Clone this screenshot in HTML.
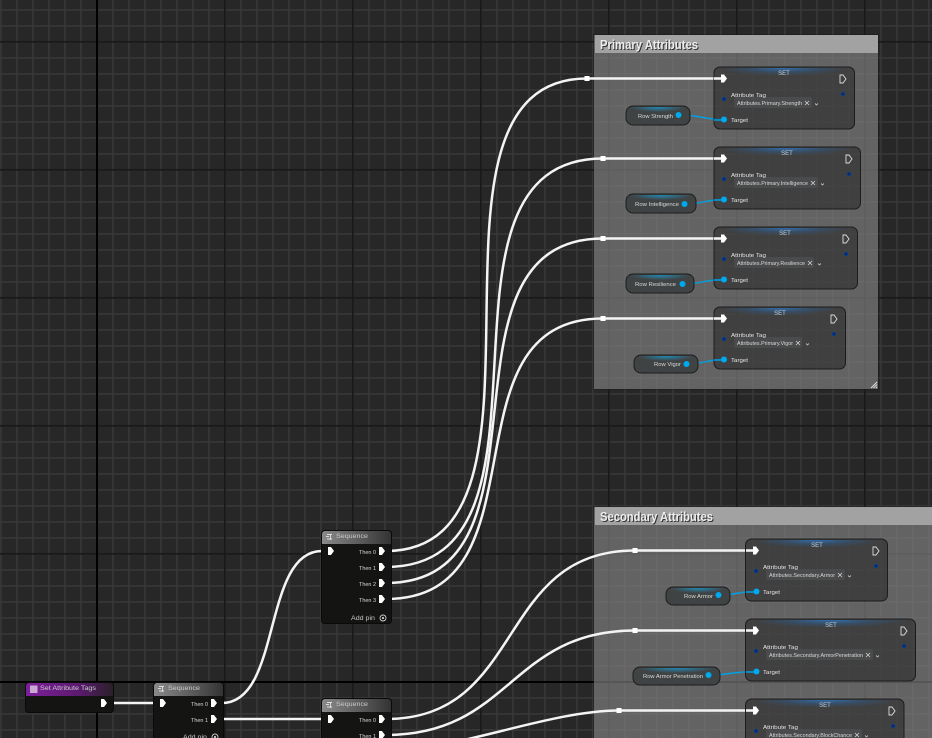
<!DOCTYPE html>
<html><head><meta charset="utf-8"><style>
html,body{margin:0;padding:0;background:#272727;width:932px;height:738px;overflow:hidden}
svg{display:block;position:absolute;left:0;top:0}
text{font-family:"Liberation Sans",sans-serif}
.s{font-size:5.4px;fill:#d8d8d8}
.t{font-size:5.4px;fill:#e4e4e4}
.c{font-size:13px;fill:#eee;font-weight:bold}
.cs{font-size:13px;fill:#333;font-weight:bold}
.h{font-size:6.6px;fill:#c8c8c8}
.w{fill:none;stroke:#f4f4f4;stroke-width:2.5}
.b{fill:none;stroke:#00a0e4;stroke-width:1.4}
</style></head><body>
<svg width="932" height="738" viewBox="0 0 932 738" xmlns="http://www.w3.org/2000/svg">
<defs>
<pattern id="g" width="16" height="16" patternUnits="userSpaceOnUse" x="0" y="9">
<rect width="16" height="16" fill="#272727"/>
<rect x="0" width="1.700" height="16" fill="#363636"/>
<rect y="0" width="16" height="1.700" fill="#363636"/>
</pattern>
<linearGradient id="sh" x1="0" y1="0" x2="1" y2="0"><stop offset="0" stop-color="#8a8a8a"/><stop offset=".75" stop-color="#4a4a4a"/><stop offset="1" stop-color="#333"/></linearGradient>
<linearGradient id="ph" x1="0" y1="0" x2="1" y2="0"><stop offset="0" stop-color="#7d1f9b"/><stop offset=".6" stop-color="#5c1a70"/><stop offset="1" stop-color="#2a2028"/></linearGradient>
<radialGradient id="bl" cx=".5" cy="0" r=".5"><stop offset="0" stop-color="#2f7fd0" stop-opacity=".75"/><stop offset=".6" stop-color="#2a5f98" stop-opacity=".35"/><stop offset="1" stop-color="#2a5f98" stop-opacity="0"/></radialGradient>
<radialGradient id="cy" cx=".5" cy="0" r=".5"><stop offset="0" stop-color="#18a0d8" stop-opacity=".75"/><stop offset="1" stop-color="#18a0d8" stop-opacity="0"/></radialGradient>
<path id="ex" d="M-3,-4H0L3,0L0,4H-3Z" fill="#fff"/>
<path id="eo" d="M-3,-4H0L3,0L0,4H-3Z" fill="none" stroke="#ddd" stroke-width=".9"/>
</defs>
<rect width="932" height="738" fill="url(#g)"/>
<g fill="#191919">
<rect x="224" width="1.700" height="738"/><rect x="352" width="1.700" height="738"/><rect x="480" width="1.700" height="738"/><rect x="608" width="1.700" height="738"/><rect x="736" width="1.700" height="738"/><rect x="864" width="1.700" height="738"/>
<rect y="41" width="932" height="1.700"/><rect y="169" width="932" height="1.700"/><rect y="297" width="932" height="1.700"/><rect y="425" width="932" height="1.700"/><rect y="553" width="932" height="1.700"/>
</g>
<rect x="96" width="2" height="738" fill="#000"/>
<rect y="681" width="932" height="2" fill="#000"/>

<!-- comment boxes -->
<rect x="593" y="34" width="286" height="356" fill="#1a1a1a" opacity=".5"/>
<rect x="594" y="35" width="284" height="354" fill="#fff" fill-opacity=".3"/>
<rect x="595" y="35" width="283" height="18" fill="#a2a2a2"/>
<text x="601" y="50" class="cs" textLength="98" lengthAdjust="spacingAndGlyphs">Primary Attributes</text>
<text x="600" y="49" class="c" textLength="98" lengthAdjust="spacingAndGlyphs">Primary Attributes</text>
<path d="M877,382L871,388M877,384.500L873.500,388M877,387L876,388" stroke="#ddd" stroke-width="1"/>
<rect x="593" y="506" width="339" height="232" fill="#1a1a1a" opacity=".5"/>
<rect x="594" y="507" width="338" height="231" fill="#fff" fill-opacity=".3"/>
<rect x="595" y="507" width="337" height="18" fill="#a2a2a2"/>
<text x="601" y="522" class="cs" textLength="113" lengthAdjust="spacingAndGlyphs">Secondary Attributes</text>
<text x="600" y="521" class="c" textLength="113" lengthAdjust="spacingAndGlyphs">Secondary Attributes</text>

<!-- white wires -->
<path class="w" d="M113,703H155"/>
<path class="w" d="M222,703C282,703 262,551 322,551H330"/>
<path class="w" d="M222,719H330"/>
<path class="w" d="M386,551C581,551 392,78.500 587,78.500H724"/>
<path class="w" d="M386,567C581,567 408,158.500 603,158.500H724"/>
<path class="w" d="M386,583C566,583 423,238.500 603,238.500H724"/>
<path class="w" d="M386,599C551,599 438,318.500 603,318.500H724"/>
<path class="w" d="M386,719C526,719 495,550.500 635,550.500H756"/>
<path class="w" d="M386,735C511,735 510,630.500 635,630.500H756"/>
<path class="w" d="M386,751C456,751 549,710.500 619,710.500H756"/>
<g fill="#fff">
<rect x="584.500" y="76" width="5" height="5"/><rect x="600.500" y="156" width="5" height="5"/><rect x="600.500" y="236" width="5" height="5"/><rect x="600.500" y="316" width="5" height="5"/><rect x="632.500" y="548" width="5" height="5"/><rect x="632.500" y="628" width="5" height="5"/><rect x="616.500" y="708" width="5" height="5"/>
</g>

<!-- blue wires -->
<path class="b" d="M679,115C700,115 703,119.500 724,119.500"/>
<path class="b" d="M685,204C703,204 706,199.500 724,199.500"/>
<path class="b" d="M683,284C702,284 705,279.500 724,279.500"/>
<path class="b" d="M687,364C704,364 707,359.500 724,359.500"/>
<path class="b" d="M719,595C737,595 738,591.500 756,591.500"/>
<path class="b" d="M708,675C730,675 734,671.500 756,671.500"/>

<!-- Set Attribute Tags -->
<g>
<rect x="25.500" y="682.500" width="88" height="30" rx="3" fill="#141513" stroke="#0a0a0a"/>
<path d="M26,696V686a3,3 0 0 1 3,-3H110a3,3 0 0 1 3,3V696Z" fill="url(#ph)"/>
<rect x="30" y="685.500" width="7.500" height="7.500" fill="#c9a8d2"/>
<text x="40" y="690" class="h" textLength="56" lengthAdjust="spacingAndGlyphs">Set Attribute Tags</text>
<use href="#ex" x="104" y="703"/>
</g>

<!-- Sequence nodes -->
<g>
<rect x="153.500" y="682.500" width="70" height="70" rx="3" fill="#141513" stroke="#0a0a0a"/>
<path d="M154,696V686a3,3 0 0 1 3,-3H220a3,3 0 0 1 3,3V696Z" fill="url(#sh)"/>
<text x="168" y="690" class="h" textLength="32" lengthAdjust="spacingAndGlyphs">Sequence</text>
<path d="M159,686.500h5M158,688.500h3M159,691h5M162.500,687v5" stroke="#ddd" stroke-width=".9" fill="none"/>
<use href="#ex" x="163" y="703"/><use href="#ex" x="214" y="703"/><use href="#ex" x="214" y="719"/>
<text x="191" y="706" class="s" textLength="17" lengthAdjust="spacingAndGlyphs">Then 0</text>
<text x="191" y="722" class="s" textLength="17" lengthAdjust="spacingAndGlyphs">Then 1</text>
<text x="183" y="739" class="h" textLength="24" lengthAdjust="spacingAndGlyphs">Add pin</text>
<circle cx="215" cy="737" r="3" fill="none" stroke="#ccc" stroke-width=".9"/><circle cx="215" cy="737" r="1.100" fill="#ccc"/>
</g>
<g>
<rect x="321.500" y="530.500" width="70" height="93" rx="3" fill="#141513" stroke="#0a0a0a"/>
<path d="M322,544V534a3,3 0 0 1 3,-3H388a3,3 0 0 1 3,3V544Z" fill="url(#sh)"/>
<text x="336" y="538" class="h" textLength="32" lengthAdjust="spacingAndGlyphs">Sequence</text>
<path d="M327,534.500h5M326,536.500h3M327,539h5M330.500,535v5" stroke="#ddd" stroke-width=".9" fill="none"/>
<use href="#ex" x="331" y="551"/><use href="#ex" x="382" y="551"/><use href="#ex" x="382" y="567"/><use href="#ex" x="382" y="583"/><use href="#ex" x="382" y="599"/>
<text x="359" y="554" class="s" textLength="17" lengthAdjust="spacingAndGlyphs">Then 0</text>
<text x="359" y="570" class="s" textLength="17" lengthAdjust="spacingAndGlyphs">Then 1</text>
<text x="359" y="586" class="s" textLength="17" lengthAdjust="spacingAndGlyphs">Then 2</text>
<text x="359" y="602" class="s" textLength="17" lengthAdjust="spacingAndGlyphs">Then 3</text>
<text x="351" y="620" class="h" textLength="24" lengthAdjust="spacingAndGlyphs">Add pin</text>
<circle cx="383" cy="618" r="3" fill="none" stroke="#ccc" stroke-width=".9"/><circle cx="383" cy="618" r="1.100" fill="#ccc"/>
</g>
<g>
<rect x="321.500" y="698.500" width="70" height="70" rx="3" fill="#141513" stroke="#0a0a0a"/>
<path d="M322,712V702a3,3 0 0 1 3,-3H388a3,3 0 0 1 3,3V712Z" fill="url(#sh)"/>
<text x="336" y="706" class="h" textLength="32" lengthAdjust="spacingAndGlyphs">Sequence</text>
<path d="M327,702.500h5M326,704.500h3M327,707h5M330.500,703v5" stroke="#ddd" stroke-width=".9" fill="none"/>
<use href="#ex" x="331" y="719"/><use href="#ex" x="382" y="719"/><use href="#ex" x="382" y="735"/>
<text x="359" y="722" class="s" textLength="17" lengthAdjust="spacingAndGlyphs">Then 0</text>
<text x="359" y="738" class="s" textLength="17" lengthAdjust="spacingAndGlyphs">Then 1</text>
</g>

<!-- Row variable nodes -->
<g>
<rect x="626" y="106" width="64" height="19" rx="7" fill="#404344" stroke="#1c1c1c"/><rect x="630" y="107" width="56" height="10" fill="url(#cy)"/>
<rect x="626" y="194" width="70" height="19" rx="7" fill="#404344" stroke="#1c1c1c"/><rect x="630" y="195" width="62" height="10" fill="url(#cy)"/>
<rect x="626" y="274" width="68" height="19" rx="7" fill="#404344" stroke="#1c1c1c"/><rect x="630" y="275" width="60" height="10" fill="url(#cy)"/>
<rect x="634" y="355" width="64" height="18" rx="7" fill="#404344" stroke="#1c1c1c"/><rect x="638" y="356" width="56" height="10" fill="url(#cy)"/>
<rect x="666" y="587" width="64" height="18" rx="7" fill="#404344" stroke="#1c1c1c"/><rect x="670" y="588" width="56" height="10" fill="url(#cy)"/>
<rect x="633" y="667" width="87" height="18" rx="7" fill="#404344" stroke="#1c1c1c"/><rect x="637" y="668" width="79" height="10" fill="url(#cy)"/>
</g>
<g fill="#00a8ee">
<circle cx="678.500" cy="115" r="3"/><circle cx="684.500" cy="204" r="3"/><circle cx="682.500" cy="284" r="3"/><circle cx="686.500" cy="364" r="3"/><circle cx="718.500" cy="595" r="3"/><circle cx="708.500" cy="675" r="3"/>
</g>
<text x="638" y="118" class="s" textLength="35" lengthAdjust="spacingAndGlyphs">Row Strength</text>
<text x="635" y="206" class="s" textLength="44" lengthAdjust="spacingAndGlyphs">Row Intelligence</text>
<text x="635" y="286" class="s" textLength="41" lengthAdjust="spacingAndGlyphs">Row Resilience</text>
<text x="654" y="366" class="s" textLength="27" lengthAdjust="spacingAndGlyphs">Row Vigor</text>
<text x="684" y="598" class="s" textLength="29" lengthAdjust="spacingAndGlyphs">Row Armor</text>
<text x="643" y="678" class="s" textLength="60" lengthAdjust="spacingAndGlyphs">Row Armor Penetration</text>

<!-- SET nodes -->
<g fill="#333" fill-opacity=".72" stroke="#1c1c1c" stroke-width="1">
<rect x="714" y="67" width="140.500" height="62" rx="6"/>
<rect x="714" y="147" width="146.500" height="62" rx="6"/>
<rect x="714" y="227" width="143.500" height="62" rx="6"/>
<rect x="714" y="307" width="131.500" height="62" rx="6"/>
<rect x="745.500" y="539" width="142" height="62" rx="6"/>
<rect x="745.500" y="619" width="170" height="62" rx="6"/>
<rect x="745.500" y="699" width="158.500" height="62" rx="6"/>
</g>
<path class="w" d="M714,78.500H724M714,158.500H724M714,238.500H724M714,318.500H724M746,550.500H756M746,630.500H756M746,710.500H756"/>
<path class="b" d="M714,120H724M714,200H724M714,280H724M714,360H724M746,592H756M746,672H756"/>
<g fill="url(#bl)">
<rect x="720" y="68" width="128" height="15"/><rect x="720" y="148" width="134" height="15"/><rect x="720" y="228" width="131" height="15"/><rect x="720" y="308" width="119" height="15"/><rect x="752" y="540" width="129" height="15"/><rect x="752" y="620" width="157" height="15"/><rect x="752" y="700" width="146" height="15"/>
</g>
<g fill="#4a4b4c">
<rect x="734" y="97" width="78" height="11" rx="2"/><rect x="734" y="177" width="84" height="11" rx="2"/><rect x="734" y="257" width="80" height="11" rx="2"/><rect x="734" y="337" width="68" height="11" rx="2"/><rect x="766" y="569" width="79" height="11" rx="2"/><rect x="766" y="649" width="107" height="11" rx="2"/><rect x="766" y="729" width="96" height="11" rx="2"/>
</g>

<g text-anchor="middle" font-size="6" fill="#c4cfd8">
<text x="784" y="75">SET</text><text x="787" y="155">SET</text><text x="785" y="235">SET</text><text x="780" y="315">SET</text><text x="817" y="547">SET</text><text x="831" y="627">SET</text><text x="825" y="707">SET</text>
</g>

<g>
<use href="#ex" x="724" y="78.500"/><use href="#ex" x="724" y="158.500"/><use href="#ex" x="724" y="238.500"/><use href="#ex" x="724" y="318.500"/><use href="#ex" x="756" y="550.500"/><use href="#ex" x="756" y="630.500"/><use href="#ex" x="756" y="710.500"/>
<use href="#eo" x="843" y="79"/><use href="#eo" x="849" y="159"/><use href="#eo" x="846" y="239"/><use href="#eo" x="834" y="319"/><use href="#eo" x="876" y="551"/><use href="#eo" x="904" y="631"/><use href="#eo" x="892" y="711"/>
</g>

<g fill="#082a6a" stroke="#0a3f90" stroke-width=".8">
<circle cx="724" cy="99" r="1.800"/><circle cx="843" cy="94" r="1.800"/>
<circle cx="724" cy="179" r="1.800"/><circle cx="849" cy="174" r="1.800"/>
<circle cx="724" cy="259" r="1.800"/><circle cx="846" cy="254" r="1.800"/>
<circle cx="724" cy="339" r="1.800"/><circle cx="834" cy="334" r="1.800"/>
<circle cx="756" cy="571" r="1.800"/><circle cx="876" cy="566" r="1.800"/>
<circle cx="756" cy="651" r="1.800"/><circle cx="904" cy="646" r="1.800"/>
<circle cx="756" cy="731" r="1.800"/><circle cx="893" cy="726" r="1.800"/>
</g>
<g fill="#00a8ee">
<circle cx="724" cy="119.500" r="3"/><circle cx="724" cy="199.500" r="3"/><circle cx="724" cy="279.500" r="3"/><circle cx="724" cy="359.500" r="3"/><circle cx="756.500" cy="591.500" r="3"/><circle cx="756.500" cy="671.500" r="3"/>
</g>

<g>
<text x="731" y="97" class="t" textLength="35" lengthAdjust="spacingAndGlyphs">Attribute Tag</text>
<text x="731" y="177" class="t" textLength="35" lengthAdjust="spacingAndGlyphs">Attribute Tag</text>
<text x="731" y="257" class="t" textLength="35" lengthAdjust="spacingAndGlyphs">Attribute Tag</text>
<text x="731" y="337" class="t" textLength="35" lengthAdjust="spacingAndGlyphs">Attribute Tag</text>
<text x="763" y="569" class="t" textLength="35" lengthAdjust="spacingAndGlyphs">Attribute Tag</text>
<text x="763" y="649" class="t" textLength="35" lengthAdjust="spacingAndGlyphs">Attribute Tag</text>
<text x="763" y="729" class="t" textLength="35" lengthAdjust="spacingAndGlyphs">Attribute Tag</text>
<text x="731" y="122" class="t" textLength="17" lengthAdjust="spacingAndGlyphs">Target</text>
<text x="731" y="202" class="t" textLength="17" lengthAdjust="spacingAndGlyphs">Target</text>
<text x="731" y="282" class="t" textLength="17" lengthAdjust="spacingAndGlyphs">Target</text>
<text x="731" y="362" class="t" textLength="17" lengthAdjust="spacingAndGlyphs">Target</text>
<text x="763" y="594" class="t" textLength="17" lengthAdjust="spacingAndGlyphs">Target</text>
<text x="763" y="674" class="t" textLength="17" lengthAdjust="spacingAndGlyphs">Target</text>
<text x="737" y="105" class="s" textLength="65" lengthAdjust="spacingAndGlyphs">Attributes.Primary.Strength</text>
<text x="737" y="185" class="s" textLength="71" lengthAdjust="spacingAndGlyphs">Attributes.Primary.Intelligence</text>
<text x="737" y="265" class="s" textLength="68" lengthAdjust="spacingAndGlyphs">Attributes.Primary.Resilience</text>
<text x="737" y="345" class="s" textLength="56" lengthAdjust="spacingAndGlyphs">Attributes.Primary.Vigor</text>
<text x="769" y="577" class="s" textLength="66" lengthAdjust="spacingAndGlyphs">Attributes.Secondary.Armor</text>
<text x="769" y="657" class="s" textLength="94" lengthAdjust="spacingAndGlyphs">Attributes.Secondary.ArmorPenetration</text>
<text x="769" y="737" class="s" textLength="83" lengthAdjust="spacingAndGlyphs">Attributes.Secondary.BlockChance</text>
</g>

<g fill="none" stroke="#ddd" stroke-width=".7">
<path d="M805,101l4,4M809,101l-4,4M815,103.500l1.500,1.500 1.500,-1.500"/>
<path d="M811,181l4,4M815,181l-4,4M821,183.500l1.500,1.500 1.500,-1.500"/>
<path d="M808,261l4,4M812,261l-4,4M818,263.500l1.500,1.500 1.500,-1.500"/>
<path d="M796,341l4,4M800,341l-4,4M806,343.500l1.500,1.500 1.500,-1.500"/>
<path d="M838,573l4,4M842,573l-4,4M848,575.500l1.500,1.500 1.500,-1.500"/>
<path d="M866,653l4,4M870,653l-4,4M876,655.500l1.500,1.500 1.500,-1.500"/>
<path d="M855,733l4,4M859,733l-4,4M865,735.500l1.500,1.500 1.500,-1.500"/>
</g>
</svg>
</body></html>
